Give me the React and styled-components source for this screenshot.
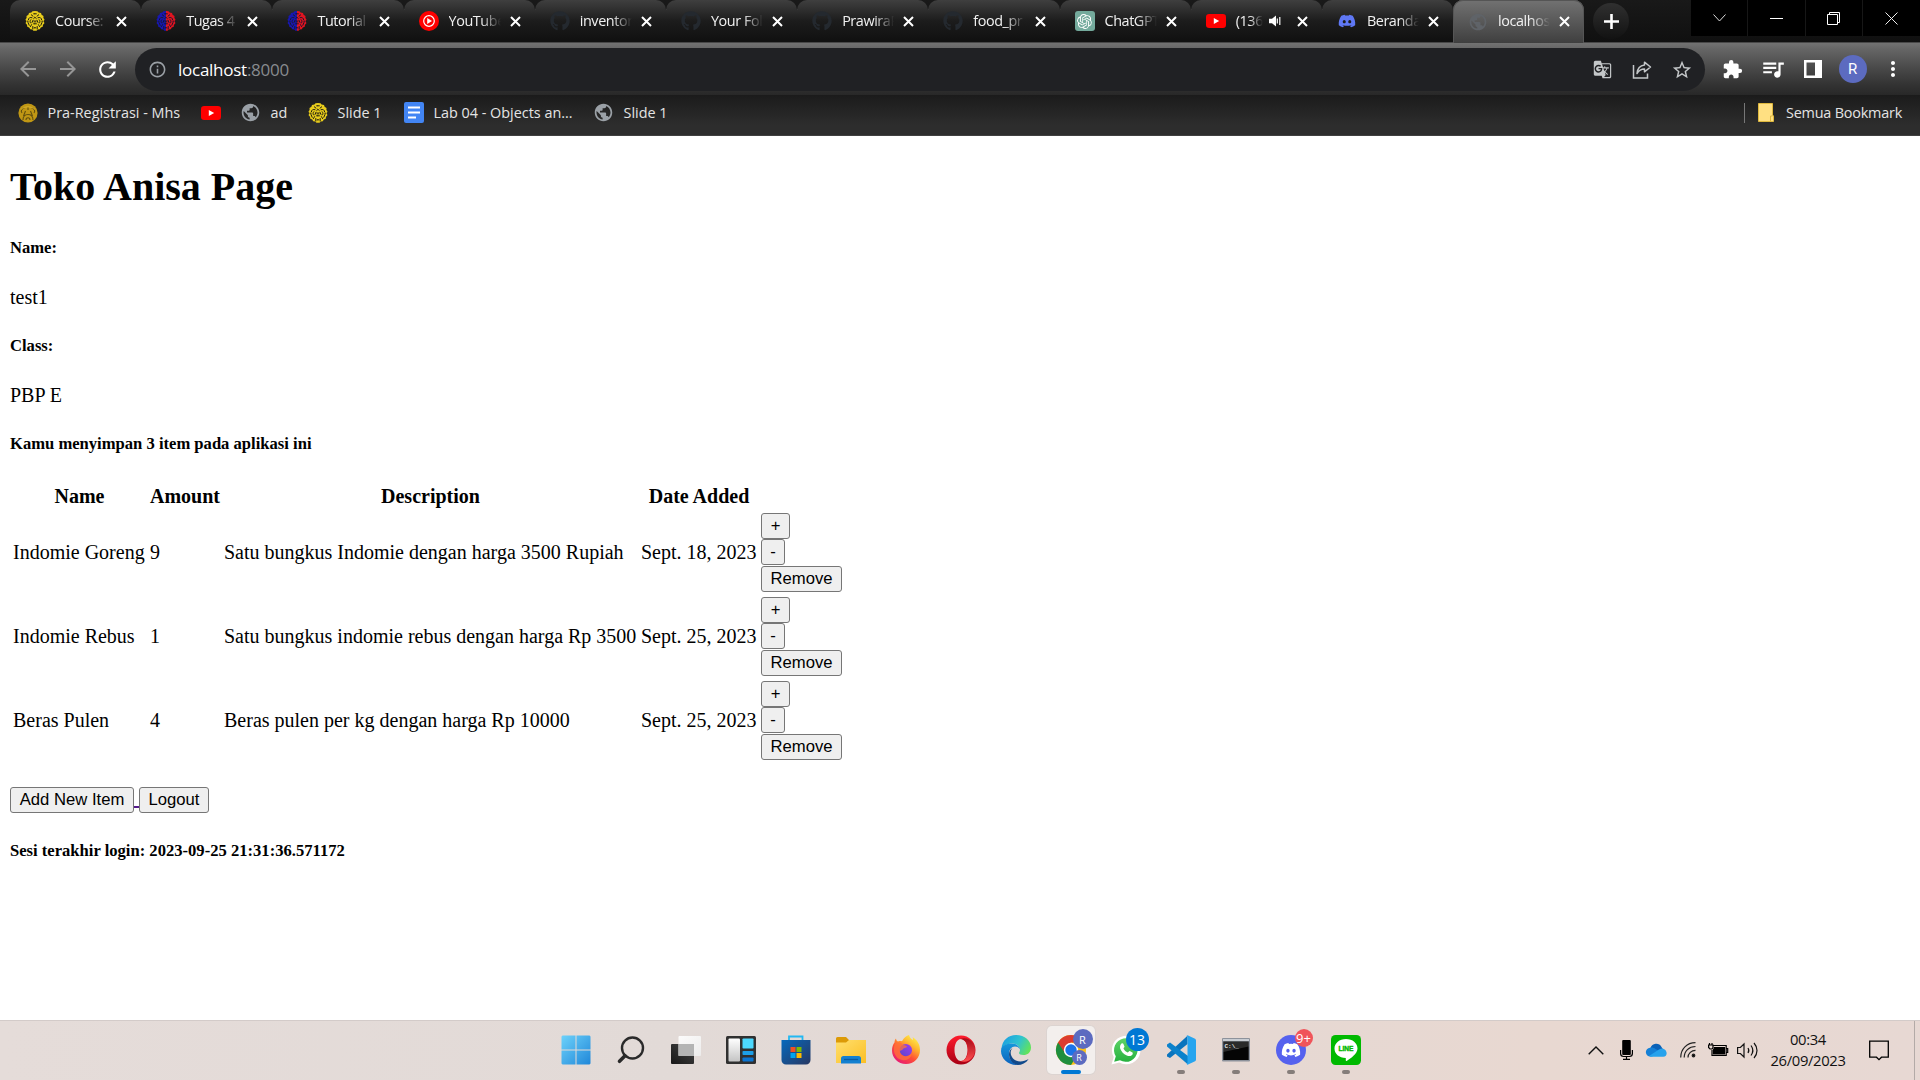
import React from "react";
import styled, { createGlobalStyle } from "styled-components";
import { FaGithub, FaDiscord } from "react-icons/fa";
import { SiOpenai } from "react-icons/si";
import {
  MdArrowBack, MdArrowForward, MdRefresh, MdInfoOutline, MdGTranslate,
  MdStarOutline, MdExtension, MdQueueMusic, MdMoreVert, MdPublic,
} from "react-icons/md";

const UI = `"Segoe UI", "Open Sans", "Noto Sans", sans-serif`;
const SERIF = `"Liberation Serif", "Times New Roman", serif`;
const SANS = `"Liberation Sans", Arial, sans-serif`;

const Global = createGlobalStyle`
  *, *::before, *::after { box-sizing: border-box; }
  html, body { margin: 0; padding: 0; background: #fff; overflow: hidden; }
  svg { display: block; flex: none; overflow: visible; }
`;

const Screen = styled.div`
  width: 1920px;
  height: 1080px;
  display: flex;
  flex-direction: column;
  background: #fff;
  overflow: hidden;
`;

/* ---------- tab strip ---------- */
const TabStrip = styled.header`
  height: 43px;
  flex: none;
  display: flex;
  padding-left: 10px;
  background: linear-gradient(#191919, #101010);
  border-bottom: 1px solid #484848;
  font-family: ${UI};
`;
const TabBox = styled.div`
  width: 131.2px;
  height: ${(p) => (p.$active ? 43 : 42)}px;
  flex: none;
  display: flex;
  align-items: center;
  padding-left: 15px;
  border-radius: 10px 10px 0 0;
  background: ${(p) =>
    p.$active ? "linear-gradient(#727272, #3f3f3f)" : "linear-gradient(#3f3f3f, #1c1c1c 50%, #111 95%)"};
  box-shadow: ${(p) => (p.$active ? "inset 0 1px 0 #555, inset 1px 0 0 #555, inset -1px 0 0 #555" : "none")};
`;
const TabLabel = styled.span`
  width: ${(p) => p.$w || 52}px;
  margin-left: 10px;
  padding-bottom: 1px;
  white-space: nowrap;
  color: #f1f1f1;
  font-size: 14.4px;
  letter-spacing: -0.42px;
  line-height: 22px;
  mask-image: linear-gradient(90deg, #000 ${(p) => (p.$w ? 50 : 62)}%, transparent 100%);
`;
const TabRest = styled.span`
  flex: 1;
  display: flex;
  align-items: center;
  justify-content: flex-end;
  gap: 16px;
  padding-right: 14px;
`;
const TabDivider = styled.i`
  width: 1px;
  height: 25px;
  margin: 1px -1px 0 0;
  background: #6a6a6a;
`;
const NewTab = styled.button`
  width: 36px;
  height: 36px;
  margin: 3px 0 0 9px;
  border: 0;
  padding: 0;
  display: grid;
  place-items: center;
  border-radius: 50%;
  background: linear-gradient(#303030, #121212);
`;
const WindowControls = styled.div`
  display: flex;
  height: 36px;
  margin-left: auto;
  background: #000;
`;
const WindowButton = styled.span`
  width: 57.25px;
  display: grid;
  place-items: center;
  border-right: 1px solid #171717;
  &:last-child { border-right: 0; }
`;

/* ---------- toolbar ---------- */
const Toolbar = styled.div`
  height: 52px;
  flex: none;
  display: flex;
  align-items: center;
  background: linear-gradient(#727272, #656565 12%, #484848 50%, #333 80%, #282828);
  font-family: ${UI};
`;
const NavButtons = styled.div`
  display: flex;
  width: 135px;
  padding-left: 7.5px;
`;
const NavButton = styled.span`
  width: 40px;
  display: grid;
  place-items: center;
  color: ${(p) => (p.$on ? "#fff" : "#969696")};
  font-size: ${(p) => (p.$on ? 25 : 24)}px;
`;
const Omnibox = styled.div`
  width: 1570px;
  height: 43px;
  margin-top: 1px;
  display: flex;
  align-items: center;
  padding: 0 3px 0 13px;
  border-radius: 22px;
  background: #202124;
  color: #9aa0a6;
`;
const Address = styled.span`
  flex: 1;
  margin-left: 11px;
  font-size: 17px;
  letter-spacing: -0.26px;
  color: #888b8f;
  b { font-weight: 400; color: #fff; }
`;
const OmniAction = styled.span`
  width: 40px;
  display: grid;
  place-items: center;
  color: #c4c7c9;
`;
const Actions = styled.div`
  display: flex;
  align-items: center;
  padding-left: 7.5px;
`;
const Action = styled.span`
  width: 40px;
  display: grid;
  place-items: center;
  color: #fff;
`;
const Avatar = styled.span`
  width: 28px;
  height: 28px;
  display: grid;
  place-items: center;
  border-radius: 50%;
  background: #5c6bc0;
  font: 15px Roboto, sans-serif;
  color: #fff;
`;

/* ---------- bookmarks ---------- */
const Bookmarks = styled.nav`
  height: 41px;
  flex: none;
  display: flex;
  align-items: center;
  padding: 0 17px 5px 18px;
  background: linear-gradient(#1b1b1b, #2d2d2d 75%);
  border-bottom: 1px solid #404040;
  font-family: ${UI};
`;
const Bookmark = styled.span`
  width: ${(p) => p.$w}px;
  display: flex;
  align-items: center;
  gap: 9.5px;
  white-space: nowrap;
  font-size: 14.4px;
  line-height: 18px;
  letter-spacing: ${(p) => p.$ls || 0}px;
  color: #e4e4e4;
`;
const AllBookmarks = styled(Bookmark)`
  height: 20px;
  margin-left: auto;
  padding-left: 13px;
  gap: 12px;
  border-left: 1px solid #777;
`;

/* ---------- document ---------- */
const Page = styled.main`
  flex: 1;
  padding: 27px 10px 0;
  font-family: ${SERIF};
  font-size: 20px;
  line-height: 23px;
  color: #000;
`;
const Title = styled.h1`
  margin: 0;
  font-size: 40px;
  line-height: 47px;
`;
const Label = styled.h5`
  margin: ${(p) => p.$top}px 0 0;
  font-size: 16.6px;
  line-height: 19px;
`;
const Value = styled.p`
  margin: 29px 0 0;
`;
const ItemTable = styled.table`
  width: 835px;
  margin-top: 28px;
  table-layout: fixed;
  border-collapse: separate;
  border-spacing: 2px;
  line-height: 24px;
  th, td { padding: 1px; white-space: nowrap; }
  th { height: 26px; }
  td { height: 82px; }
`;
const Col = styled.col`
  width: ${(p) => p.$w}px;
`;
const ButtonStack = styled.div`
  display: flex;
  flex-direction: column;
  align-items: flex-start;
`;
const Button = styled.button`
  width: ${(p) => p.$w}px;
  height: 26px;
  padding: 0;
  border: 1px solid #767676;
  border-radius: 3px;
  background: #efefef;
  color: #000;
  font: 16.67px/22px ${SANS};
`;
const StackButton = styled(Button)`
  & + & { margin-top: 0.5px; }
`;
const Links = styled.div`
  margin-top: 20px;
  line-height: 30px;
  a { color: #551a8b; text-decoration: underline; }
`;

/* ---------- taskbar ---------- */
const Taskbar = styled.footer`
  height: 60px;
  flex: none;
  display: flex;
  background: linear-gradient(90deg, #e5dcd9, #e2dad7 35%, #e5d8d3 60%, #e8d8d1 80%, #e7d8d3);
  border-top: 1px solid #d3cbc9;
  font-family: ${UI};
`;
const Apps = styled.div`
  display: flex;
  align-items: center;
  margin-left: 548.5px;
`;
const AppSlot = styled.div`
  position: relative;
  width: 55px;
  height: 59px;
  padding-bottom: 1px;
  display: grid;
  place-items: center;
`;
const Tile = styled.div`
  width: 48px;
  height: 48px;
  display: grid;
  place-items: center;
  border-radius: 5px;
  background: #f3efed;
  box-shadow: 0 0 0 1px #dcd4d1;
`;
const Indicator = styled.i`
  position: absolute;
  left: 50%;
  bottom: 6px;
  width: ${(p) => (p.$active ? 20 : 8)}px;
  height: 4px;
  transform: translateX(-50%);
  border-radius: 2px;
  background: ${(p) => (p.$active ? "#0078d4" : "#857d7a")};
`;
const Badge = styled.span`
  position: absolute;
  left: ${(p) => p.$x}px;
  top: ${(p) => p.$y}px;
  min-width: ${(p) => p.$s}px;
  height: ${(p) => p.$s}px;
  display: grid;
  place-items: center;
  border-radius: 12px;
  background: ${(p) => p.$c};
  color: #fff;
  font-size: ${(p) => p.$f}px;
  line-height: 1;
`;
const Tray = styled.div`
  display: flex;
  align-items: center;
  margin-left: auto;
`;
const TrayCell = styled.span`
  width: ${(p) => p.$w}px;
  padding-bottom: 1px;
  display: grid;
  place-items: center;
`;
const Clock = styled.div`
  width: 80px;
  margin: 0 21px 2px 5px;
  text-align: center;
  white-space: nowrap;
  font-size: 14.8px;
  line-height: 21px;
  letter-spacing: -0.35px;
  color: #111;
`;
const ShowDesktop = styled.i`
  width: 6px;
  height: 59px;
  margin-left: 25px;
  border-left: 1px solid #b3aaa7;
`;

/* ---------- drawings ---------- */
const Makara = ({ a = "#e8cc1c", b = a, ink = "#1d1b12" }) => (
  <svg width="20" height="20" viewBox="0 0 20 20" fill="none">
    {[a, b].map((c, i) => (
      <g key={i} transform={i ? "translate(20 0) scale(-1 1)" : undefined}>
        <path
          d="M10 0 7.500.3 6.400 1.600 4 2 3.400 3.800 1.500 5 1.600 7 .5 8.600 1.200 10.300.6 12.300 2 13.800 2.300 15.800 4.200 16.600 5.200 18.300 7.200 18.500 8.500 19.800H10z"
          fill={c}
        />
        <path
          d="M10 2.800H8.700M8 5.200 6.300 3.800M7 6.700C5 6 3.600 6.800 3.400 8.600M5.800 8.700c-1 1.100-1 2.300-.2 3.300M10 6.300 8.700 7.500M8 9.300 7 11.500M10 12.800H8.600M3 11.500l1.200 2.800M6.600 13.600l-1.200 2M7.800 15.500V18M10 16.800H9.200M2 10.200h1.200M9.200 9.800v1.300"
          stroke={ink}
          strokeWidth="1"
          strokeLinecap="round"
        />
      </g>
    ))}
  </svg>
);
const Registry = () => (
  <svg width="20" height="20" viewBox="0 0 20 20" fill="none">
    <circle cx="10" cy="10" r="9.600" fill="#c09714" />
    <path d="M10 4v3M7 4.500C3.500 5 2.500 8 4 10M13 4.500c3.500.5 4.500 3.500 3 5.500M7.500 8 5.500 13M12.500 8l2 5M5 17c0-4 2-5.500 5-5.500s5 1.500 5 5.500M8 17c0-3 4-3 4 0" stroke="#63500f" strokeWidth="1.100" />
    <path d="M3 6.500C6 3 14 3 17 6.500" stroke="#dbb32e" strokeWidth="1" />
  </svg>
);
const YouTube = () => (
  <svg width="20" height="14" viewBox="0 0 20 14">
    <rect width="20" height="14" rx="3.200" fill="#f00" />
    <path d="m7.800 4 5.400 3-5.400 3z" fill="#fff" />
  </svg>
);
const YTMusic = () => (
  <svg width="20" height="20" viewBox="0 0 20 20">
    <circle cx="10" cy="10" r="10" fill="#f00" />
    <circle cx="10" cy="10" r="5.300" fill="none" stroke="#fff" strokeWidth="1.200" />
    <path d="m8.200 7 4.800 3-4.800 3z" fill="#fff" />
  </svg>
);
const GptBox = styled.span`
  width: 20px;
  height: 20px;
  display: grid;
  place-items: center;
  border-radius: 3px;
  background: #74aa9c;
  color: #fff;
`;
const Docs = () => (
  <svg width="20" height="21" viewBox="0 0 20 21">
    <rect width="20" height="21" rx="2" fill="#4285f4" />
    <path d="M4 5.500h12M4 10.500h12M4 15.500h8" stroke="#fff" strokeWidth="2" />
  </svg>
);
const Folder = () => (
  <svg width="16" height="19" viewBox="0 0 16 19">
    <path d="M.5.500h14V12l1 1v5.500H.5z" fill="#ffe082" stroke="#dfb93e" />
    <path d="M12.500 18v-5h2" fill="none" stroke="#dfb93e" />
  </svg>
);
const CloseX = () => (
  <svg width="11" height="11" viewBox="0 0 11 11">
    <path d="m1 1 9 9M10 1l-9 9" stroke="#fff" strokeWidth="2" />
  </svg>
);
const Sound = () => (
  <svg width="12" height="12" viewBox="0 0 12 12" fill="#fff">
    <path d="M0 3.800h3L7 .6v10.800L3 8.200H0z" />
    <path d="M8.300 3.500v5M10.800 2v8" stroke="#fff" strokeWidth="1.200" />
  </svg>
);
const Share = () => (
  <svg width="20" height="20" viewBox="0 0 20 20" fill="none" stroke="#c4c7c9" strokeWidth="1.500">
    <path d="M1.500 5v13h14v-4.500" />
    <path d="M12.500 2.200 18.500 7l-6 4.800V9C9 9 7 10.200 5 13.500 5.400 8.800 8 5.500 12.500 5z" strokeLinejoin="round" />
  </svg>
);

const WindowsLogo = () => (
  <svg width="30" height="30" viewBox="0 0 30 30">
    <defs>
      <linearGradient id="win" gradientUnits="userSpaceOnUse" x1="0" y1="0" x2="30" y2="30">
        <stop stopColor="#6ed3fb" /><stop offset="1" stopColor="#1f86d8" />
      </linearGradient>
    </defs>
    <path d="M1.500.5h13v14H.5v-13zM15.500.500h13l1 1v13h-14zM.5 15.500h14v14h-13l-1-1zM15.500 15.500h14v13l-1 1h-13z" fill="url(#win)" />
  </svg>
);
const SearchGlass = () => (
  <svg width="30" height="30" viewBox="0 0 30 30" fill="none" stroke="#2a2a2a" strokeLinecap="round">
    <circle cx="16.500" cy="13" r="10.500" strokeWidth="2.400" />
    <path d="M9 20.800 3.500 26.300" strokeWidth="3.600" />
  </svg>
);
const TaskView = () => (
  <svg width="30" height="30" viewBox="0 0 30 30">
    <defs>
      <linearGradient id="tv" x1="0" y1="1" x2="1" y2="0"><stop stopColor="#181818" /><stop offset="1" stopColor="#444" /></linearGradient>
      <linearGradient id="tw" x1="0" y1="0" x2="1" y2="1"><stop stopColor="#fff" /><stop offset="1" stopColor="#eee" /></linearGradient>
    </defs>
    <rect y="9" width="23" height="20" rx="1" fill="url(#tv)" />
    <rect x="7.500" y="1" width="22.500" height="20" rx="1" fill="url(#tw)" opacity=".9" />
    <path d="M7.500 9H23v12H7.500z" fill="#b4b4b4" />
  </svg>
);
const Widgets = () => (
  <svg width="30" height="30" viewBox="0 0 30 30">
    <defs><linearGradient id="wg" x1="0" y1="0" x2="0" y2="1"><stop stopColor="#fff" /><stop offset="1" stopColor="#c4c4c4" /></linearGradient></defs>
    <rect y="1" width="30" height="28" rx="1.500" fill="#303030" />
    <rect x="2.500" y="3.500" width="11.500" height="23" rx="1" fill="url(#wg)" />
    <rect x="16.500" y="3.500" width="11" height="10" rx=".8" fill="#4cd8fd" />
    <rect x="16.500" y="16" width="11" height="4" rx=".8" fill="#1d9fe8" />
    <rect x="16.500" y="22.500" width="11" height="4" rx=".8" fill="#0b74d1" />
  </svg>
);
const Store = () => (
  <svg width="30" height="30" viewBox="0 0 30 30">
    <defs><linearGradient id="st" x1="0" y1="0" x2="1" y2="1"><stop stopColor="#0669bd" /><stop offset="1" stopColor="#283863" /></linearGradient></defs>
    <path d="M8 6V1.500h13.500V6" fill="none" stroke="#22b8f2" strokeWidth="1.800" />
    <path d="M.5 5h29v20a4.500 4.500 0 0 1-4.500 4.500H5A4.500 4.500 0 0 1 .5 25z" fill="url(#st)" />
    <path d="M9.500 12h5v5h-5z" fill="#f25022" /><path d="M15.500 12h5v5h-5z" fill="#7fba00" />
    <path d="M9.500 18h5v5h-5z" fill="#00a4ef" /><path d="M15.500 18h5v5h-5z" fill="#ffb900" />
  </svg>
);
const Explorer = () => (
  <svg width="30" height="30" viewBox="0 0 30 30">
    <defs><linearGradient id="ex" x1="0" y1="0" x2="1" y2="1"><stop stopColor="#ffdf6e" /><stop offset="1" stopColor="#fbbf24" /></linearGradient></defs>
    <path d="M0 3.500A1.500 1.500 0 0 1 1.500 2H10l3 3v4H0z" fill="#dc9a07" />
    <path d="M0 7.500h10L13 5h17v23H0z" fill="url(#ex)" />
    <path d="M5 28.500v-5a2.500 2.500 0 0 1 2.500-2.500h15a2.500 2.500 0 0 1 2.500 2.500v5z" fill="#1480d0" />
    <path d="M8 24.500h14" stroke="#0a5ba2" strokeWidth="1.300" />
  </svg>
);
const Firefox = () => (
  <svg width="30" height="30" viewBox="0 0 30 30">
    <defs>
      <linearGradient id="ff" x1=".85" y1=".05" x2=".2" y2="1"><stop stopColor="#fff44f" /><stop offset=".3" stopColor="#ffb52e" /><stop offset=".6" stopColor="#ff4f35" /><stop offset="1" stopColor="#e4147c" /></linearGradient>
      <linearGradient id="fg" x1="1" y1="0" x2="0" y2="1"><stop stopColor="#a03cf0" /><stop offset="1" stopColor="#5a46c8" /></linearGradient>
    </defs>
    <path d="M18 0c1 3 2 4 4 5 0-1 0-2-.4-3C26 5 29 9 29 15c0 8-6 14-14 14S1 23 1 15.500c0-3.500 1-6 2.500-8C3.500 6 4 4.500 5 3.500c.2 1.500.8 2.500 2 3 1-.4 2.500-.5 4-.3C13 2.500 15.500 1 18 0z" fill="url(#ff)" />
    <circle cx="14.800" cy="15.200" r="6.200" fill="url(#fg)" />
    <path d="M4 9c4-3 7-1 8 1 3 0 4 1 4 2-1 1-3 .8-4 2-.6 1.500-2 1-3 2 0 3 3 6 7 5 2 0 4-2 5-4 0 6-5 9-10 8C4 24 1 15 4 9z" fill="#ff7139" opacity=".75" />
  </svg>
);
const Opera = () => (
  <svg width="30" height="30" viewBox="0 0 30 30">
    <defs>
      <linearGradient id="op" x1="0" y1="0" x2="0" y2="1"><stop stopColor="#ff1b2d" /><stop offset="1" stopColor="#a70014" /></linearGradient>
      <linearGradient id="oq" x1="0" y1="0" x2="0" y2="1"><stop stopColor="#a80b18" /><stop offset="1" stopColor="#ff4f51" /></linearGradient>
    </defs>
    <path fillRule="evenodd" d="M15 .5a14.500 14.500 0 1 0 0 29 14.500 14.500 0 0 0 0-29zm0 3.500c4 0 6.500 5 6.500 11S19 26 15 26 8.500 21 8.500 15 11 4 15 4z" fill="url(#op)" />
    <path d="M14 4c9-3 15 4 15 11s-6 14-15 11c5 .6 8-5 8-11S19 4 14 4z" fill="url(#oq)" />
  </svg>
);
const Edge = () => (
  <svg width="30" height="30" viewBox="0 0 30 30">
    <defs>
      <linearGradient id="ea" x1="0" y1=".2" x2="1" y2=".6"><stop stopColor="#1b9de2" /><stop offset=".55" stopColor="#2fc3d0" /><stop offset="1" stopColor="#62e35a" /></linearGradient>
      <linearGradient id="eb" x1="0" y1="0" x2="0" y2="1"><stop stopColor="#1697db" /><stop offset="1" stopColor="#0b62bd" /></linearGradient>
    </defs>
    <path d="M.5 14C1 5 7.500 0 15 0c9 0 15 6 15 12.500 0 5-3.500 7.500-7.500 7.500-3 0-4.500-1-4.500-2 0-.8 1-1.200 1-3.500 0-3-3-6-7.500-6C6 8.500 2 11 .5 14z" fill="url(#ea)" />
    <path d="M.3 13.500C2 10 6 8.500 10.500 8.500c5 0 8.500 2.800 8.500 6-1-2-3-3-5-3-3.500 0-6 3-6 7.500 0 5 4 10.500 9.500 10.800C8 31 0 24 0 16z" fill="url(#eb)" />
    <path d="M11.500 13C9 16 9 20 12 23.500c4 4 10 3.800 15.700.5-2.700 4-7 6-11 6C11 29 8 24 8 19c0-2.500 1.500-5 3.500-6z" fill="#114a8b" />
  </svg>
);
const Chrome = () => (
  <svg width="30" height="30" viewBox="0 0 30 30">
    <circle cx="15" cy="15" r="15" fill="#fbc116" />
    <path d="M15 15 2 7.500A15 15 0 0 0 15 30l7-11z" fill="#1e8e3e" />
    <path d="M2 7.500A15 15 0 0 1 28 7.500H15L9 18z" fill="#dc3b2f" />
    <circle cx="15" cy="15" r="7.200" fill="#fff" /><circle cx="15" cy="15" r="5.700" fill="#1a73e8" />
  </svg>
);
const VSCode = () => (
  <svg width="30" height="30" viewBox="0 0 30 30">
    <path d="M1 19.500 21.500.800V9L4 23 1 21.500z" fill="#0a74bd" />
    <path d="M1 9.500 4 7.500 22 21v8.500L1 11.500z" fill="#0b82cc" />
    <path d="m21.500.200 7 3.200c.9.4 1.500 1.200 1.500 2.200v18.800c0 1-.6 1.800-1.500 2.200l-7 3.200-1-1c.6 0 1-.5 1-1.200V2.300c0-.7-.4-1.100-1-1.200z" fill="#27a5ef" />
  </svg>
);
const PromptText = styled.text`
  font: bold 6px "Liberation Mono", monospace;
`;
const Cmd = () => (
  <svg width="28" height="24" viewBox="0 0 28 24">
    <rect width="28" height="23.500" rx="1" fill="#8d929b" />
    <rect x="1" y="1" width="26" height="2" fill="#c8ccd2" />
    <rect x="1.300" y="3.500" width="25.400" height="18.500" fill="#050505" />
    <path d="M1.300 3.500h25.400v5L1.300 14z" fill="#fff" opacity=".15" />
    <PromptText x="2.500" y="9.500" fill="#e8e8e8">C:\_</PromptText>
  </svg>
);
const DiscordDisc = styled.span`
  width: 30px;
  height: 30px;
  display: grid;
  place-items: center;
  border-radius: 50%;
  background: #5561ee;
  color: #fff;
`;
const WhatsAppIcon = () => (
  <svg width="30" height="30" viewBox="0 0 30 30">
    <defs><linearGradient id="wa" x1="0" y1="0" x2="0" y2="1"><stop stopColor="#5fd468" /><stop offset="1" stopColor="#27b13f" /></linearGradient></defs>
    <path d="M.5 29.500 2.700 22A14.300 14.300 0 1 1 8.200 27.500z" fill="#fff" />
    <path d="m3.200 26.800 1.600-5.500a11.800 11.800 0 1 1 4.200 4z" fill="url(#wa)" />
    <path d="M10.500 8.500c.7-.6 1.500-.4 1.800.2l1.200 2.800c.2.600-1 1.500-1 1.900.8 1.900 2.300 3.200 4.200 4 .5.100 1.500-1.600 2-1.400l2.800 1.400c.5.300.3 1.600-.2 2.300-1.200 1.500-3.300 1.500-5.500.7-3.300-1.300-6-4.400-6.700-7.200-.3-1.700.2-3.600 1.400-4.700z" fill="#fff" />
  </svg>
);
const LineText = styled.text`
  font: bold 6.600px ${SANS};
`;
const LineApp = () => (
  <svg width="30" height="30" viewBox="0 0 30 30">
    <rect width="30" height="30" rx="4.500" fill="#00b900" />
    <path d="M15 4c6.600 0 11.500 4.200 11.500 9.500 0 5-6.500 9.700-10.800 12.500-1.200.6-.9-1.100-.9-3C8 22.800 3.500 18.800 3.500 13.500 3.500 8.200 8.400 4 15 4z" fill="#fff" />
    <LineText x="15" y="16" textAnchor="middle" fill="#00b900" stroke="#00b900" strokeWidth=".4">LINE</LineText>
  </svg>
);

const BLUE = "#1717b0";
const RED = "#e01420";
const tabs = [
  { icon: <Makara />, label: "Course:" },
  { icon: <Makara a={BLUE} b={RED} ink="#181830" />, label: "Tugas 4" },
  { icon: <Makara a={BLUE} b={RED} ink="#181830" />, label: "Tutorial" },
  { icon: <YTMusic />, label: "YouTube" },
  { icon: <FaGithub size={20} color="#24292f" />, label: "inventor" },
  { icon: <FaGithub size={20} color="#24292f" />, label: "Your Fol" },
  { icon: <FaGithub size={20} color="#24292f" />, label: "PrawiraR" },
  { icon: <FaGithub size={20} color="#24292f" />, label: "food_pr" },
  { icon: <GptBox><SiOpenai size={15} /></GptBox>, label: "ChatGPT" },
  { icon: <YouTube />, label: "(136", sound: true },
  { icon: <FaDiscord size={18} color="#5f78f5" />, label: "Beranda" },
  { icon: <MdPublic size={20} color="#5f6368" />, label: "localhos", active: true },
];
const IconSlot = styled.span`
  width: 20px;
  display: grid;
  place-items: center;
`;
const columns = [["Name", 135], ["Amount", 72], ["Description", 415], ["Date Added", 118], ["", 83]];
const items = [
  ["Indomie Goreng", 9, "Satu bungkus Indomie dengan harga 3500 Rupiah", "Sept. 18, 2023"],
  ["Indomie Rebus", 1, "Satu bungkus indomie rebus dengan harga Rp 3500", "Sept. 25, 2023"],
  ["Beras Pulen", 4, "Beras pulen per kg dengan harga Rp 10000", "Sept. 25, 2023"],
];
const apps = [
  { icon: <WindowsLogo /> }, { icon: <SearchGlass /> }, { icon: <TaskView /> }, { icon: <Widgets /> },
  { icon: <Store /> }, { icon: <Explorer /> }, { icon: <Firefox /> }, { icon: <Opera /> }, { icon: <Edge /> },
  {
    icon: <Tile><Chrome /></Tile>, run: "active",
    badges: [{ $x: 29, $y: 8, $s: 20, $c: "#5c6bc0", $f: 11, t: "R" }, { $x: 28, $y: 29, $s: 15, $c: "#5c6bc0", $f: 9, t: "R" }],
  },
  { icon: <WhatsAppIcon />, badges: [{ $x: 27, $y: 7, $s: 23, $c: "#0078d4", $f: 14, t: "13" }] },
  { icon: <VSCode />, run: "open" },
  { icon: <Cmd />, run: "open" },
  { icon: <DiscordDisc><FaDiscord size={20} /></DiscordDisc>, run: "open", badges: [{ $x: 31, $y: 8, $s: 18, $c: "#f0545a", $f: 13, t: "9+" }] },
  { icon: <LineApp />, run: "open" },
];

export default function App() {
  return (
    <Screen>
      <Global />
      <TabStrip>
        {tabs.map((t, i) => (
          <TabBox key={i} $active={t.active}>
            <IconSlot>{t.icon}</IconSlot>
            <TabLabel $w={t.sound ? 27 : 0}>{t.label}</TabLabel>
            <TabRest>
              {t.sound && <Sound />}
              <CloseX />
            </TabRest>
            {i < 10 && <TabDivider />}
          </TabBox>
        ))}
        <NewTab>
          <svg width="15" height="15" viewBox="0 0 15 15"><path d="M7.500 0v15M0 7.500h15" stroke="#fff" strokeWidth="2.600" /></svg>
        </NewTab>
        <WindowControls>
          <WindowButton><svg width="13" height="8" viewBox="0 0 13 8"><path d="m.5.500 6 6.500 6-6.500" fill="none" stroke="#ddd" /></svg></WindowButton>
          <WindowButton><svg width="13" height="1" viewBox="0 0 13 1"><path d="M0 .5h13" stroke="#fff" /></svg></WindowButton>
          <WindowButton><svg width="13" height="13" viewBox="0 0 13 13"><path d="M.5 2.500h10v10H.5zM2.500 2.500v-2h10v10h-2" fill="none" stroke="#fff" /></svg></WindowButton>
          <WindowButton><svg width="13" height="13" viewBox="0 0 13 13"><path d="m.5.500 12 12m0-12-12 12" stroke="#eee" /></svg></WindowButton>
        </WindowControls>
      </TabStrip>

      <Toolbar>
        <NavButtons>
          <NavButton><MdArrowBack /></NavButton>
          <NavButton><MdArrowForward /></NavButton>
          <NavButton $on><MdRefresh /></NavButton>
        </NavButtons>
        <Omnibox>
          <MdInfoOutline size={19} />
          <Address><b>localhost</b>:8000</Address>
          <OmniAction><MdGTranslate size={19} /></OmniAction>
          <OmniAction><Share /></OmniAction>
          <OmniAction><MdStarOutline size={22} /></OmniAction>
        </Omnibox>
        <Actions>
          <Action><MdExtension size={21} /></Action>
          <Action><MdQueueMusic size={26} /></Action>
          <Action>
            <svg width="18" height="18" viewBox="0 0 18 18"><path fillRule="evenodd" d="M0 0h18v18H0zM2.500 2.500v13H11v-13z" fill="#fff" /></svg>
          </Action>
          <Action><Avatar>R</Avatar></Action>
          <Action><MdMoreVert size={24} /></Action>
        </Actions>
      </Toolbar>

      <Bookmarks>
        <Bookmark $w={183}><Registry />Pra-Registrasi - Mhs</Bookmark>
        <Bookmark $w={39}><YouTube /></Bookmark>
        <Bookmark $w={68}><MdPublic size={21} color="#9aa0a6" />ad</Bookmark>
        <Bookmark $w={96}><Makara />Slide 1</Bookmark>
        <Bookmark $w={189}><Docs />Lab 04 - Objects an...</Bookmark>
        <Bookmark $w={90}><MdPublic size={21} color="#9aa0a6" />Slide 1</Bookmark>
        <AllBookmarks $w={159} $ls={-0.2}><Folder />Semua Bookmark</AllBookmarks>
      </Bookmarks>

      <Page>
        <Title>Toko Anisa Page</Title>
        <Label $top={28}>Name:</Label>
        <Value>test1</Value>
        <Label $top={27}>Class:</Label>
        <Value>PBP E</Value>
        <Label $top={27}>Kamu menyimpan 3 item pada aplikasi ini</Label>
        <ItemTable>
          <colgroup>{columns.map(([n, w]) => <Col key={n} $w={w} />)}</colgroup>
          <thead>
            <tr>{columns.map(([n]) => <th key={n}>{n}</th>)}</tr>
          </thead>
          <tbody>
            {items.map((row) => (
              <tr key={row[0]}>
                {row.map((cell, i) => <td key={i}>{cell}</td>)}
                <td>
                  <ButtonStack>
                    <StackButton $w={29}>+</StackButton>
                    <StackButton $w={24}>-</StackButton>
                    <StackButton $w={81}>Remove</StackButton>
                  </ButtonStack>
                </td>
              </tr>
            ))}
          </tbody>
        </ItemTable>
        <Links>
          <a><Button $w={124}>Add New Item</Button>{" "}</a>
          <a><Button $w={70}>Logout</Button></a>
        </Links>
        <Label $top={28}>Sesi terakhir login: 2023-09-25 21:31:36.571172</Label>
      </Page>

      <Taskbar>
        <Apps>
          {apps.map((a, i) => (
            <AppSlot key={i}>
              {a.icon}
              {a.run && <Indicator $active={a.run === "active"} />}
              {(a.badges || []).map(({ t, ...b }, k) => <Badge key={k} {...b}>{t}</Badge>)}
            </AppSlot>
          ))}
        </Apps>
        <Tray>
          <TrayCell $w={30}><svg width="16" height="9" viewBox="0 0 16 9"><path d="m.7 8.300 7.300-7.300 7.300 7.300" fill="none" stroke="#111" strokeWidth="1.400" /></svg></TrayCell>
          <TrayCell $w={30}>
            <svg width="13" height="20" viewBox="0 0 13 20"><rect x="2.200" width="8.600" height="15" rx="1" fill="#000" /><path d="M.6 10v3.500c0 2 1 3 3 3h5.800c2 0 3-1 3-3V10M6.500 16.500v3M3 19.400h7" fill="none" stroke="#000" strokeWidth="1.200" /></svg>
          </TrayCell>
          <TrayCell $w={31}>
            <svg width="21" height="14" viewBox="0 0 21 14"><path d="M4.500 5A6 6 0 0 1 15.500 4L18 8 6 12z" fill="#0b62b8" /><path d="M4 4.700c2-.5 4 0 5.500 1.300L15 9l-9 4.500H4.500A4.400 4.400 0 0 1 4 4.700z" fill="#1580d6" /><path d="M3 13 13 6.500c1.500-1 3-1.300 4.200-.8 4.500 1.500 4.800 7.800 0 8H4.500z" fill="#27a2ec" /></svg>
          </TrayCell>
          <TrayCell $w={31}>
            <svg width="16" height="16" viewBox="0 0 16 16" fill="none" stroke="#222" strokeWidth="1.200"><path d="M.7 15.500C.7 7 7 .700 15.500.700M4.200 15.500C4.200 9 9 4.500 15.500 4.500M8 15.500c0-4 3.500-7.200 7.500-7.200" /><circle cx="13.500" cy="13.500" r="1.300" fill="#000" /></svg>
          </TrayCell>
          <TrayCell $w={29}>
            <svg width="20" height="14" viewBox="0 0 20 14" fill="none" stroke="#000" strokeWidth="1.200"><path d="M5.500 2.500h12.700v10H4V7M18.500 5.500h1.200v4h-1.200M1.500 0v2M4 0v2M.6 2h4.400v2.500L4 6H2L.6 4.500z" /><path d="M6.500 4.500h10v6.500H5.500V7z" fill="#000" /></svg>
          </TrayCell>
          <TrayCell $w={31}>
            <svg width="21" height="17" viewBox="0 0 21 17" fill="none" stroke="#111" strokeWidth="1.200"><path d="M.6 5.500h2.800L7 2v13L3.400 11.500H.6zM11 6c1 1.500 1 3.500 0 5M14 3.500c2.200 3 2.200 7 0 10M17 1c4 4.500 4 10.500 0 15" /></svg>
          </TrayCell>
          <Clock>00:34<br />26/09/2023</Clock>
          <svg width="20" height="21" viewBox="0 0 20 21"><path d="M.7 1.200h18.600v16H12.500L10 19.700 7.500 17.200H.7z" fill="none" stroke="#000" strokeWidth="1.300" /></svg>
          <ShowDesktop />
        </Tray>
      </Taskbar>
    </Screen>
  );
}
